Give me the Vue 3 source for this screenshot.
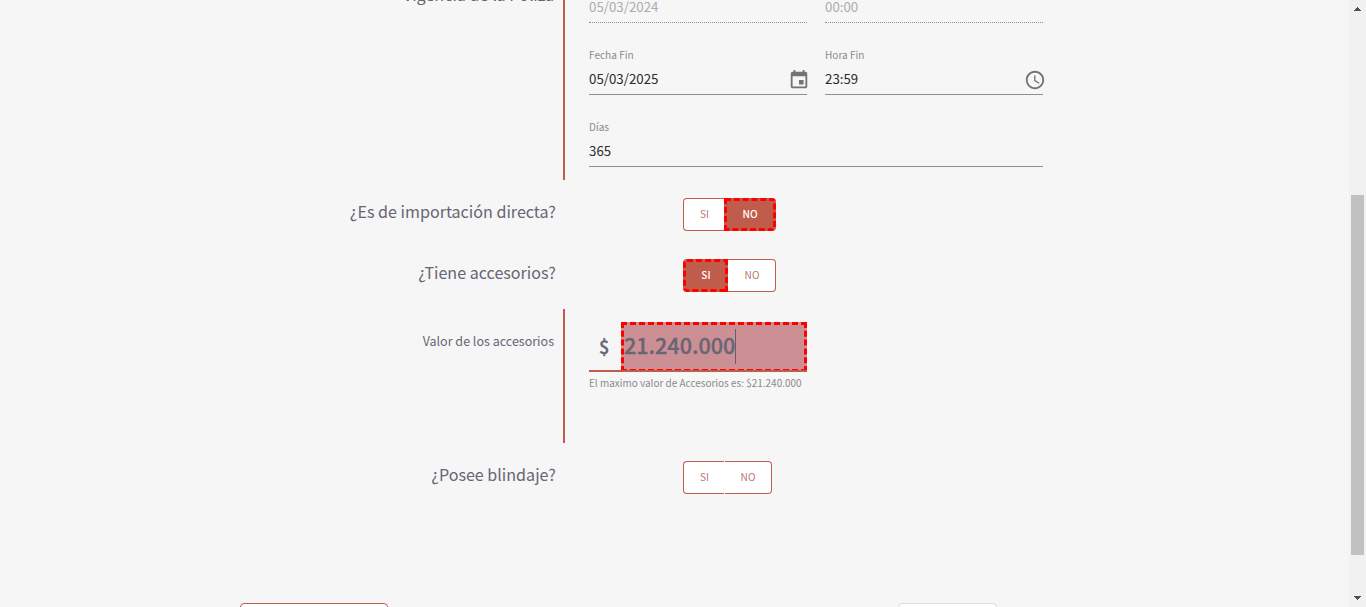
<script setup>
const questions = {
  importacion: { text: '¿Es de importación directa?', selected: 'NO' },
  accesorios: { text: '¿Tiene accesorios?', selected: 'SI' },
  blindaje: { text: '¿Posee blindaje?', selected: '' }
}
</script>

<template>
  <div class="page">
    <main class="content">
      <section class="row policy">
        <div class="side"><h2 class="question policy-title">Vigencia de la Póliza</h2></div>
        <div class="fields">
          <div class="field disabled"><span class="value">05/03/2024</span></div>
          <div class="field disabled"><span class="value">00:00</span></div>
          <div class="field">
            <label>Fecha Fin</label><span class="value">05/03/2025</span>
            <svg class="icon" viewBox="0 0 24 24"><path d="M17 12h-5v5h5v-5zM16 1v2H8V1H6v2H5c-1.11 0-1.99.9-1.99 2L3 19c0 1.1.89 2 2 2h14c1.1 0 2-.9 2-2V5c0-1.1-.9-2-2-2h-1V1h-2zm3 18H5V8h14v11z" /></svg>
          </div>
          <div class="field">
            <label>Hora Fin</label><span class="value">23:59</span>
            <svg class="icon" viewBox="0 0 24 24"><path d="M11.99 2C6.47 2 2 6.48 2 12s4.47 10 9.99 10C17.52 22 22 17.52 22 12S17.52 2 11.99 2zM12 20c-4.42 0-8-3.58-8-8s3.58-8 8-8 8 3.58 8 8-3.58 8-8 8zm.5-13H11v6l5.25 3.15.75-1.23-4.5-2.67z" /></svg>
          </div>
          <div class="field wide"><label>Días</label><span class="value">365</span></div>
        </div>
      </section>

      <section v-for="key in ['importacion', 'accesorios']" :key="key" class="row choice">
        <div class="side"><h2 class="question">{{ questions[key].text }}</h2></div>
        <div class="toggle">
          <button v-for="option in ['SI', 'NO']" :key="option" :class="[option.toLowerCase(), { active: option === questions[key].selected }]">{{ option }}</button>
        </div>
      </section>

      <section class="row accessories">
        <div class="side"><span class="sub">Valor de los accesorios</span></div>
        <div class="amount">
          <div class="amount-line">
            <span class="currency">$</span>
            <div class="amount-input"><span class="number">21.240.000</span><i class="caret"></i></div>
          </div>
          <p class="hint">El maximo valor de Accesorios es: $21.240.000</p>
        </div>
      </section>

      <section class="row choice">
        <div class="side"><h2 class="question">{{ questions.blindaje.text }}</h2></div>
        <div class="toggle unset"><button class="si">SI</button><button class="no">NO</button></div>
      </section>

      <footer class="actions">
        <button class="back"></button>
        <button class="next"></button>
      </footer>
    </main>
    <aside class="scrollbar">
      <svg class="arrow" viewBox="0 0 17 17" shape-rendering="crispEdges"><path d="M8 7h1v1h1v1h1v1h1v1H5v-1h1V9h1V8h1z" /></svg>
      <div class="thumb"></div>
      <svg class="arrow down" viewBox="0 0 17 17" shape-rendering="crispEdges"><path d="M5 6h7v1h-1v1h-1v1H9v1H8V9H7V8H6V7H5z" /></svg>
    </aside>
  </div>
</template>

<style>
html, body { margin: 0; overflow: hidden; background: #f6f6f6; }
</style>

<style scoped>
* { box-sizing: border-box; }
.page {
  display: flex;
  width: 1366px;
  height: 607px;
  overflow: hidden;
  background: #f6f6f6;
  color: #686574;
  font-family: "Noto Sans CJK SC", "Noto Sans", sans-serif;
}
.content { width: 1349px; height: 607px; overflow: hidden; display: flex; flex-direction: column; }
.row { display: flex; flex: none; }
.side { width: 565px; flex: none; text-align: right; }
.question { margin: 0; padding-right: 9px; font-size: 16.1px; font-weight: 400; line-height: 24px; white-space: nowrap; }

.policy { height: 180px; }
.policy .side, .accessories .side { border-right: 2px solid #c05c4b; }
.policy-title { margin-top: -18px; font-size: 16.1px; }
.fields {
  display: grid;
  grid-template-columns: 218px 218px;
  grid-auto-rows: 72px;
  column-gap: 18px;
  width: 454px;
  margin: -49px 0 0 24px;
}
.field { position: relative; display: flex; flex-direction: column; padding-top: 25px; border-bottom: 1px solid #8f8f8f; }
.field label { height: 14px; line-height: 14px; font-size: 10.07px; color: #8c8a8f; }
.value { margin-top: 5px; line-height: 24px; font-size: 13.3px; color: #2b2b2b; }
.disabled { border-bottom-style: dotted; }
.disabled .value { margin-top: 19px; color: #acacac; }
.wide { grid-column: 1 / 3; }
.icon { position: absolute; fill: #737373; width: 22px; height: 22px; right: -3px; top: 46px; }

.choice { height: 33px; margin-top: 18px; }
.choice + .choice { margin-top: 28px; }
.choice .question { margin-top: 1px; }
.toggle { display: flex; height: 33px; margin-left: 118px; }
.toggle button {
  height: 33px;
  padding: 0 0 1px;
  background: #fff;
  border: 1px solid #c05c4b;
  color: #b9776b;
  font: 400 10.1px/30px "Noto Sans CJK SC", "Noto Sans", sans-serif;
}
.toggle .si { width: 42px; border-right: 0; border-radius: 4px 0 0 4px; }
.toggle .no { width: 47px; border-left: 0; border-radius: 0 4px 4px 0; }
.toggle.unset .si { width: 41px; padding-left: 1px; }
.toggle.unset .no { margin-left: 1px; }
.toggle.unset { background: linear-gradient(#fff, #fff) 41px 0 / 1px 33px no-repeat; }
.toggle .active { background: #c05c4b; border: 3px dashed #f00; color: #fff; font-weight: 500; line-height: 26px; }
.toggle .si.active { width: 45px; padding-left: 1px; }
.toggle .active + .no { width: 48px; padding-left: 1px; }
.toggle .no.active { width: 52px; margin-left: -1px; }

.accessories { height: 134px; margin-top: 17px; }
.sub { display: block; margin-top: 21px; padding-right: 9px; font-size: 12.53px; line-height: 22px; }
.amount { width: 218px; margin-left: 24px; padding-top: 13px; }
.amount-line { position: relative; display: flex; height: 50px; }
.amount-line::after { content: ""; position: absolute; left: 0; right: 0; bottom: 0; height: 2px; background: #c05c4b; }
.currency { width: 32px; padding-left: 10px; font-size: 18px; font-weight: 500; line-height: 49px; -webkit-text-stroke: 0.4px #686574; }
.amount-input {
  display: flex;
  width: 186px;
  height: 50px;
  border: 3px dashed #f00;
  background: #cc8f94;
}
.number { font-size: 21.6px; font-weight: 500; line-height: 39px; -webkit-text-stroke: 0.3px #686574; }
.caret { width: 1px; height: 35px; margin-top: 4px; background: #636070; }
.hint { margin: 4px 0 0; font-size: 9.97px; line-height: 14px; color: #8c8a8f; white-space: nowrap; }

.actions { display: flex; flex: none; justify-content: space-between; width: 757px; margin: 109px 0 0 240px; }
.actions button { height: 34px; padding: 0; background: #fff; border: 1px solid #c05c4b; border-radius: 4px; }
.actions .back { width: 148px; }
.actions .next { width: 99px; border-color: #dcdcdc; }

.scrollbar { width: 17px; height: 607px; display: flex; flex-direction: column; background: #f1f1f1; }
.arrow { width: 17px; height: 17px; flex: none; fill: #505050; }
.thumb { width: 13px; height: 360px; margin: 178px 0 0 2px; background: #c1c1c1; }
.down { margin-top: auto; }
</style>
